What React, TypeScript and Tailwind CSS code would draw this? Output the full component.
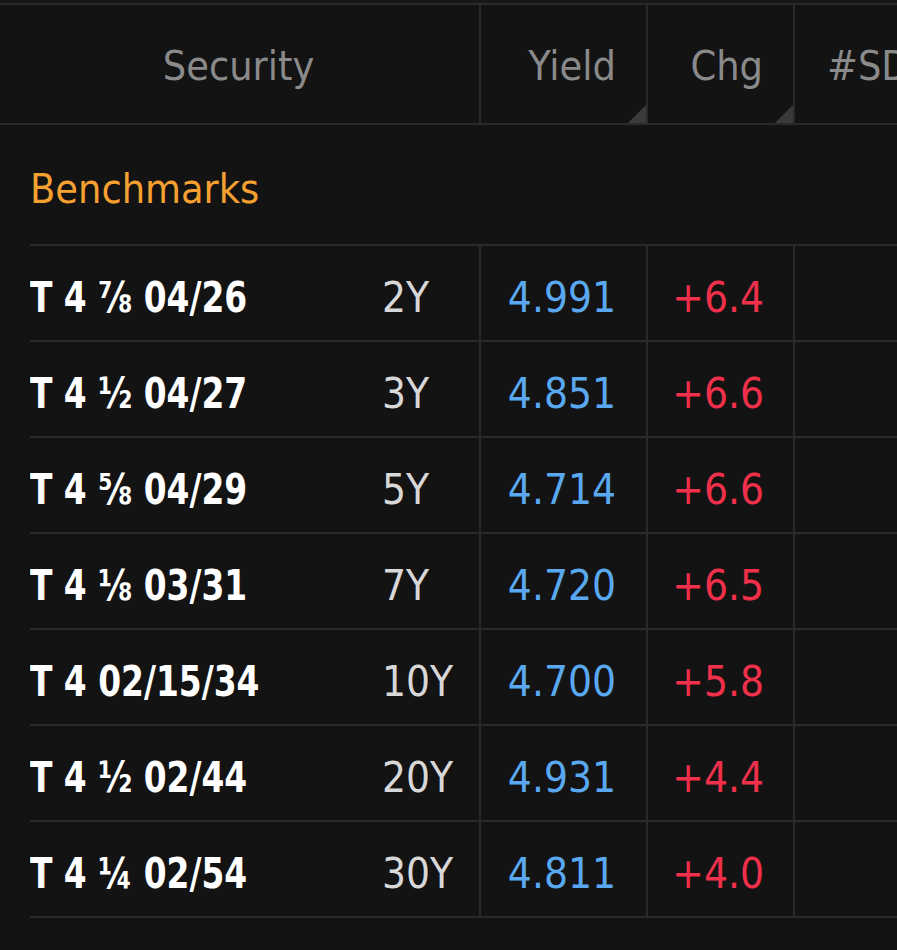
const rows = [
  ["T 4 ⅞ 04/26", "2Y", "4.991", "+6.4"],
  ["T 4 ½ 04/27", "3Y", "4.851", "+6.6"],
  ["T 4 ⅝ 04/29", "5Y", "4.714", "+6.6"],
  ["T 4 ⅛ 03/31", "7Y", "4.720", "+6.5"],
  ["T 4 02/15/34", "10Y", "4.700", "+5.8"],
  ["T 4 ½ 02/44", "20Y", "4.931", "+4.4"],
  ["T 4 ¼ 02/54", "30Y", "4.811", "+4.0"],
];

export default function App() {
  return (
    <div
      className="w-[897px] h-[950px] bg-[#131313] overflow-hidden"
      style={{ fontFamily: '"DejaVu Sans Condensed", "Liberation Sans", sans-serif' }}
    >
      <div className="h-[5px] bg-[#181818] border-b-2 border-[#2a2a2a]" />
      <div className="grid grid-cols-[481px_167px_147px_1fr] h-[120px] border-b-2 border-[#2a2a2a] text-[41px] text-[#8a8a8a]">
        <div className="flex items-center justify-center pt-[6px] pr-[2px] border-r-2 border-[#2a2a2a]">Security</div>
        <div className="relative flex items-center justify-end pt-[6px] pr-[30px] border-r-2 border-[#2a2a2a]">
          Yield
          <div className="absolute right-0 bottom-0 w-0 h-0 border-l-[18px] border-l-transparent border-b-[18px] border-b-[#3a3a3a]" />
        </div>
        <div className="relative flex items-center justify-end pt-[6px] pr-[30px] border-r-2 border-[#2a2a2a]">
          Chg
          <div className="absolute right-0 bottom-0 w-0 h-0 border-l-[18px] border-l-transparent border-b-[18px] border-b-[#3a3a3a]" />
        </div>
        <div className="flex items-center pt-[6px] pl-[32px] whitespace-nowrap overflow-hidden">#SD</div>
      </div>
      <div className="pl-[30px]">
        <div className="h-[119px] flex items-center pt-[10px] text-[41px] text-[#f5a030]">Benchmarks</div>
        <div className="border-t-2 border-[#2a2a2a]">
          {rows.map((r, i) => (
            <div key={i} className="grid grid-cols-[451px_167px_147px_1fr] h-[96px] border-b-2 border-[#2a2a2a] text-[42px]">
              <div className="flex items-center pt-[8px] border-r-2 border-[#2a2a2a] relative">
                <span className="inline-block text-white font-bold whitespace-nowrap scale-x-[0.87] origin-left">{r[0]}</span>
                <span className="absolute left-[352px] text-[#d8d8d8]">{r[1]}</span>
              </div>
              <div className="flex items-center justify-end pt-[8px] pr-[30px] border-r-2 border-[#2a2a2a] text-[#5aa8f0]">{r[2]}</div>
              <div className="flex items-center justify-end pt-[8px] pr-[29px] border-r-2 border-[#2a2a2a] text-[#f0304a]">{r[3]}</div>
              <div />
            </div>
          ))}
        </div>
      </div>
    </div>
  );
}
